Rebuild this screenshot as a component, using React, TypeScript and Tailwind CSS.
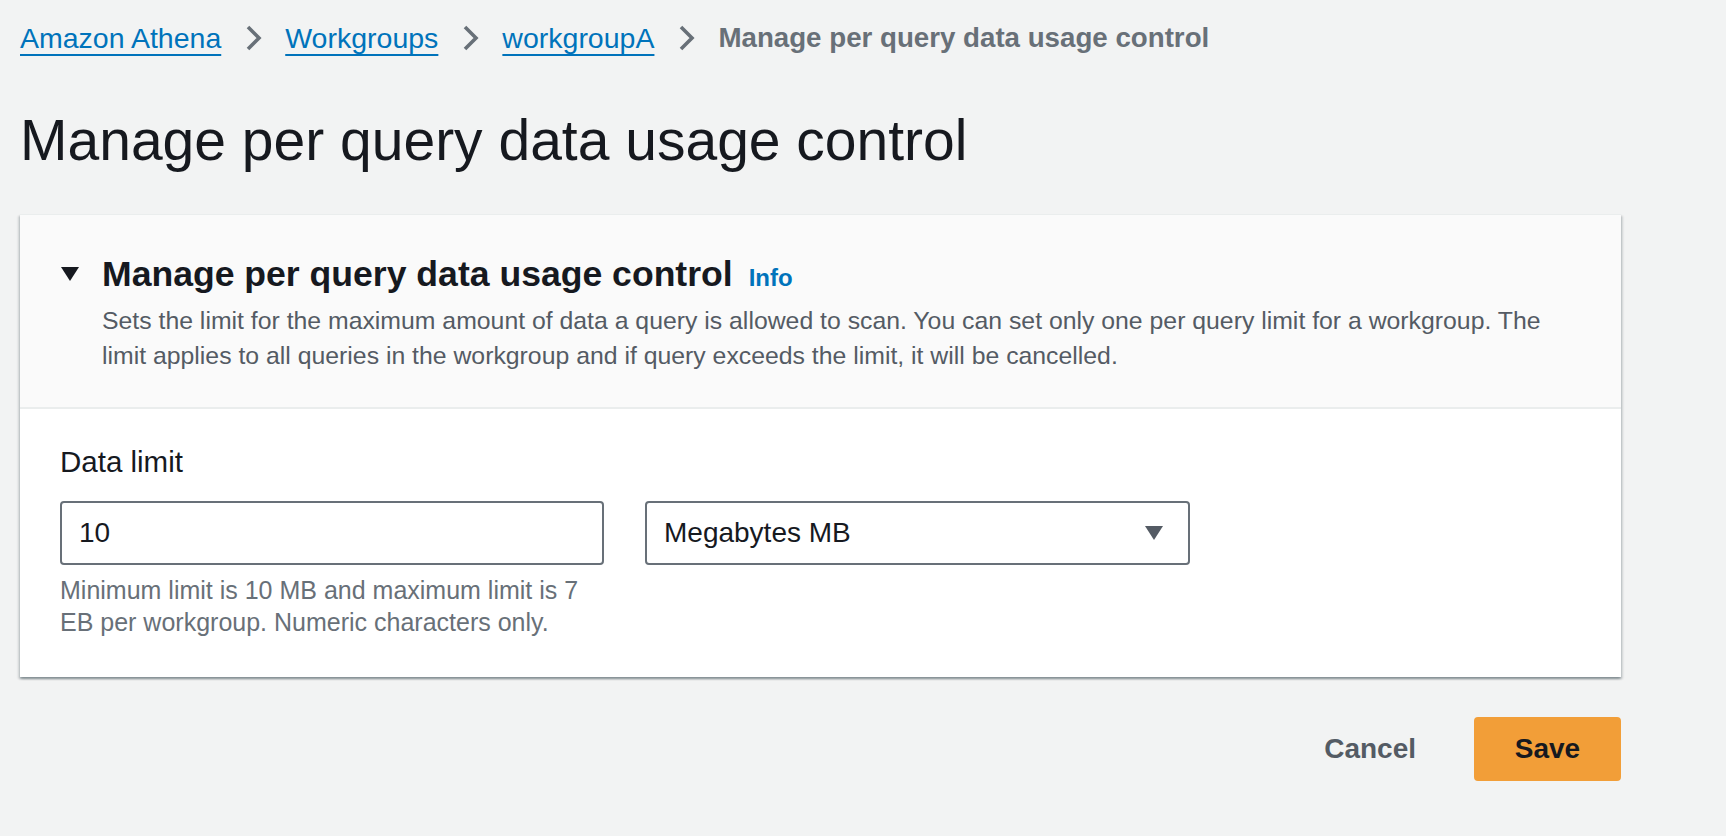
import React from "react";

function Chevron() {
  return (
    <svg width="32" height="32" viewBox="0 0 16 16" className="shrink-0">
      <path d="M5.5 2.5l5.5 5.5-5.5 5.5" fill="none" stroke="#687078" strokeWidth="1.8" />
    </svg>
  );
}

function CaretDown({ w, h, color }: { w: number; h: number; color: string }) {
  return (
    <svg width={w} height={h} viewBox={`0 0 ${w} ${h}`} className="shrink-0">
      <polygon points={`0,0 ${w},0 ${w / 2},${h}`} fill={color} />
    </svg>
  );
}

const crumbs = ["Amazon Athena", "Workgroups", "workgroupA"];

export default function App() {
  return (
    <div
      className="min-h-screen bg-[#f2f3f3] pl-[20px] pt-[18px] text-[#16191f]"
      style={{ fontFamily: '"Liberation Sans", Arial, sans-serif' }}
    >
      <div className="w-[1601px]">
        <nav className="flex h-[40px] items-center gap-[16px] leading-[40px]">
          {crumbs.map((c) => (
            <React.Fragment key={c}>
              <a
                href="#"
                className="text-[28.5px] text-[#0073bb] underline decoration-2 underline-offset-[6px]"
              >
                {c}
              </a>
              <Chevron />
            </React.Fragment>
          ))}
          <span className="text-[27.7px] font-bold text-[#687078]">Manage per query data usage control</span>
        </nav>

        <h1 className="mt-[46px] text-[57px] font-normal leading-[72px]">
          Manage per query data usage control
        </h1>

        <div className="mt-[38px] border-t border-[#eaeded] bg-white shadow-[0_2px_2px_0_rgba(0,28,36,0.3),2px_2px_2px_0_rgba(0,28,36,0.12),-2px_2px_2px_0_rgba(0,28,36,0.12)]">
          <div className="border-b-2 border-[#eaeded] bg-[#fafafa] pb-[34px] pl-[41px] pr-[40px] pt-[37px]">
            <div className="flex h-[44px] items-center">
              <CaretDown w={18} h={14} color="#16191f" />
              <h2 className="ml-[23px] text-[35.6px] font-bold leading-[44px]">
                Manage per query data usage control
              </h2>
              <a href="#" className="ml-[16px] mt-[8px] text-[24px] font-bold text-[#0073bb]">
                Info
              </a>
            </div>
            <p className="ml-[41px] mt-[7px] text-[24.8px] leading-[35px] text-[#545b64]">
              Sets the limit for the maximum amount of data a query is allowed to scan. You can set only one per query limit
              for a workgroup. The limit applies to all queries in the workgroup and if query exceeds the limit, it will be
              cancelled.
            </p>
          </div>

          <div className="px-[40px] pb-[39px] pt-[33px]">
            <label className="block text-[29.5px] leading-[40px]">Data limit</label>
            <div className="mt-[19px] flex gap-[41px]">
              <div className="w-[544px]">
                <div className="flex h-[64px] items-center rounded-[4px] border-2 border-[#687078] bg-white pl-[17px] text-[28px]">
                  10
                </div>
                <p className="mt-[9px] text-[25px] leading-[32px] text-[#687078]">
                  Minimum limit is 10 MB and maximum limit is 7 EB per workgroup. Numeric characters only.
                </p>
              </div>
              <div className="flex h-[64px] w-[545px] items-center justify-between rounded-[4px] border-2 border-[#687078] bg-white pl-[17px] pr-[25px] text-[28px]">
                <span>Megabytes MB</span>
                <CaretDown w={18} h={14} color="#545b64" />
              </div>
            </div>
          </div>
        </div>

        <div className="mt-[40px] flex justify-end gap-[16px]">
          <button className="h-[64px] rounded-[4px] border-2 border-transparent px-[40px] text-[28px] font-bold text-[#545b64]">
            Cancel
          </button>
          <button className="h-[64px] w-[147px] rounded-[4px] border-2 border-[#f29e38] bg-[#f29e38] text-[28px] font-bold text-[#16191f]">
            Save
          </button>
        </div>
      </div>
    </div>
  );
}
